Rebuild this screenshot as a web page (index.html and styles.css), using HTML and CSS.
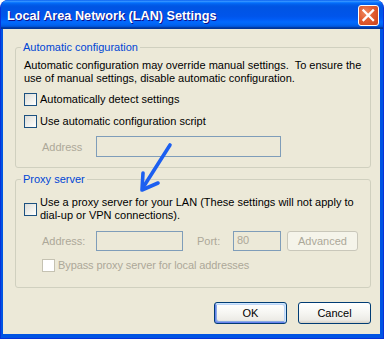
FILE: index.html
```html
<!DOCTYPE html>
<html lang="en">
<head>
    <meta charset="UTF-8">
    <meta name="viewport" content="width=device-width, initial-scale=1.0">
    <title>Local Area Network (LAN) Settings</title>
    <link rel="stylesheet" href="styles.css">
</head>
<body>
    <div class="window">
        <div class="titlebar">
            <span class="title">Local Area Network (LAN) Settings</span>
            <button class="close-btn" aria-label="Close">
                <svg width="21" height="21" viewBox="0 0 21 21">
                    <path d="M5.5 5.5 L15 15 M15 5.5 L5.5 15" stroke="#fff" stroke-width="2.3" stroke-linecap="square" fill="none"/>
                </svg>
            </button>
        </div>

        <div class="client">
            <!-- Automatic configuration -->
            <fieldset class="group">
                <legend>Automatic configuration</legend>
                <p class="note">Automatic configuration may override manual settings.&nbsp; To ensure the<br>use of manual settings, disable automatic configuration.</p>
                <label class="option"><span class="check"></span>Automatically detect settings</label>
                <label class="option"><span class="check"></span>Use automatic configuration script</label>
                <div class="field-row">
                    <span class="field-label">Address</span>
                    <span class="textbox address-wide"></span>
                </div>
            </fieldset>

            <!-- Proxy server -->
            <fieldset class="group proxy">
                <legend>Proxy server</legend>
                <label class="option"><span class="check"></span><span>Use a proxy server for your LAN (These settings will not apply to<br>dial-up or VPN connections).</span></label>
                <div class="field-row proxy-row">
                    <span class="field-label">Address:</span>
                    <span class="textbox address-short"></span>
                    <span class="field-label port-label">Port:</span>
                    <span class="textbox port">80</span>
                    <button class="btn advanced" disabled>Advanced</button>
                </div>
                <label class="option bypass"><span class="check disabled"></span>Bypass proxy server for local addresses</label>
            </fieldset>

            <div class="actions">
                <button class="btn default">OK</button>
                <button class="btn">Cancel</button>
            </div>
        </div>

        <svg class="arrow" width="384" height="339" viewBox="0 0 384 339">
            <g stroke="#1c5ff0" stroke-width="3.6" stroke-linecap="round" stroke-linejoin="round" fill="none">
                <path d="M169 145 L143 186"/>
                <path d="M142 173 L141 190 L157 183"/>
            </g>
        </svg>
    </div>
</body>
</html>
```

FILE: styles.css
```css
body {
    margin: 0;
    padding: 0;
    background-color: #fff;
    font-family: "Liberation Sans", Arial, sans-serif;
    font-size: 11px;
    color: #000;
}
.window {
    position: relative;
    width: 384px;
    height: 339px;
    box-sizing: border-box;
    display: flex;
    flex-direction: column;
    background-color: #0054e3;
    border: 1px solid #0831d9;
    border-top: none;
    border-radius: 8px 8px 0 0;
    overflow: hidden;
}
.titlebar {
    height: 29px;
    flex-shrink: 0;
    margin: 0 -1px;
    padding: 1px 5px 0 7px;
    box-sizing: border-box;
    display: flex;
    align-items: center;
    justify-content: space-between;
    background: linear-gradient(to bottom, #0058ee 0%, #3a93ff 4%, #288eff 6%, #127dff 8%, #036ffc 10%, #0262ee 14%, #0057e5 20%, #0054e3 24%, #0055eb 56%, #005bf5 66%, #026afe 76%, #0062ef 86%, #0052d6 92%, #0040ab 94%, #003092 100%);
}
.title {
    padding-top: 3px;
    font-weight: bold;
    font-size: 12.7px;
    line-height: 15px;
    color: #fff;
    text-shadow: 1px 1px #0f1089;
}
.close-btn {
    width: 21px;
    height: 21px;
    padding: 0;
    border: 1px solid #fff;
    border-radius: 3px;
    background: radial-gradient(circle at 35% 35%, #f08a60 0%, #e15d31 45%, #c9421b 100%);
    box-sizing: border-box;
    display: flex;
    align-items: center;
    justify-content: center;
}
.close-btn svg {
    display: block;
    margin: -1px;
}
.client {
    flex: 1;
    margin: 0 3px 4px 2px;
    padding: 12px 9px 0 12px;
    background-color: #ece9d8;
    display: flex;
    flex-direction: column;
}
.group {
    margin: 0;
    padding: 5px 8px 10px 8px;
    border: 1px solid #d0d0bf;
    border-radius: 3px;
}
.group legend {
    margin-left: -3px;
    padding: 0 2px;
    line-height: 13px;
    color: #0046d5;
}
.group.proxy {
    margin-top: 5px;
    padding-top: 10px;
    padding-bottom: 15px;
}
.note {
    margin: 0;
    line-height: 13px;
}
.option {
    display: flex;
    align-items: center;
    gap: 3px;
    margin-top: 8px;
    line-height: 13px;
}
.option + .option {
    margin-top: 9px;
}
.proxy .option {
    margin-top: 0;
}
.check {
    width: 13px;
    height: 13px;
    flex-shrink: 0;
    box-sizing: border-box;
    border: 1px solid #1c5180;
    background: linear-gradient(135deg, #dcdcd7 0%, #f2f2ee 60%, #ffffff 100%);
}
.check.disabled {
    border-color: #c5c2b2;
    background: #fff;
}
.field-row {
    display: flex;
    align-items: center;
    margin-top: 8px;
    padding-left: 18px;
}
.field-label {
    width: 54px;
    color: #aca899;
}
.textbox {
    height: 21px;
    box-sizing: border-box;
    border: 1px solid #7f9db9;
    background-color: #ece9d8;
    color: #aca899;
    padding: 3px 0 0 3px;
    line-height: 13px;
}
.address-wide {
    width: 185px;
}
.proxy-row {
    margin-top: 9px;
}
.proxy-row .textbox {
    height: 20px;
    padding-top: 2px;
}
.address-short {
    width: 87px;
}
.port-label {
    width: 36px;
    margin-left: 14px;
}
.port {
    width: 48px;
}
.option.bypass {
    margin-top: 8px;
    padding-left: 18px;
    color: #aca899;
    letter-spacing: -0.1px;
}
.btn {
    width: 73px;
    height: 22px;
    padding: 0;
    box-sizing: border-box;
    font-family: "Liberation Sans", Arial, sans-serif;
    font-size: 11px;
    color: #000;
    border: 1px solid #003c74;
    border-radius: 3px;
    background: linear-gradient(to bottom, #ffffff 0%, #f6f6f2 50%, #ecebe6 85%, #d6d0c5 100%);
}
.btn.default {
    box-shadow: inset -1px 1px #cee7ff, inset 1px -1px #6982ee, inset -2px 2px #bcd4f6, inset 2px -2px #89ade4;
}
.btn.advanced {
    width: 71px;
    height: 20px;
    margin-left: 6px;
    color: #aca899;
    border-color: #c9c7ba;
    background: #f5f4ea;
}
.actions {
    display: flex;
    justify-content: flex-end;
    gap: 11px;
    margin-top: 14px;
}
.arrow {
    position: absolute;
    left: 0;
    top: 0;
    pointer-events: none;
}
```
